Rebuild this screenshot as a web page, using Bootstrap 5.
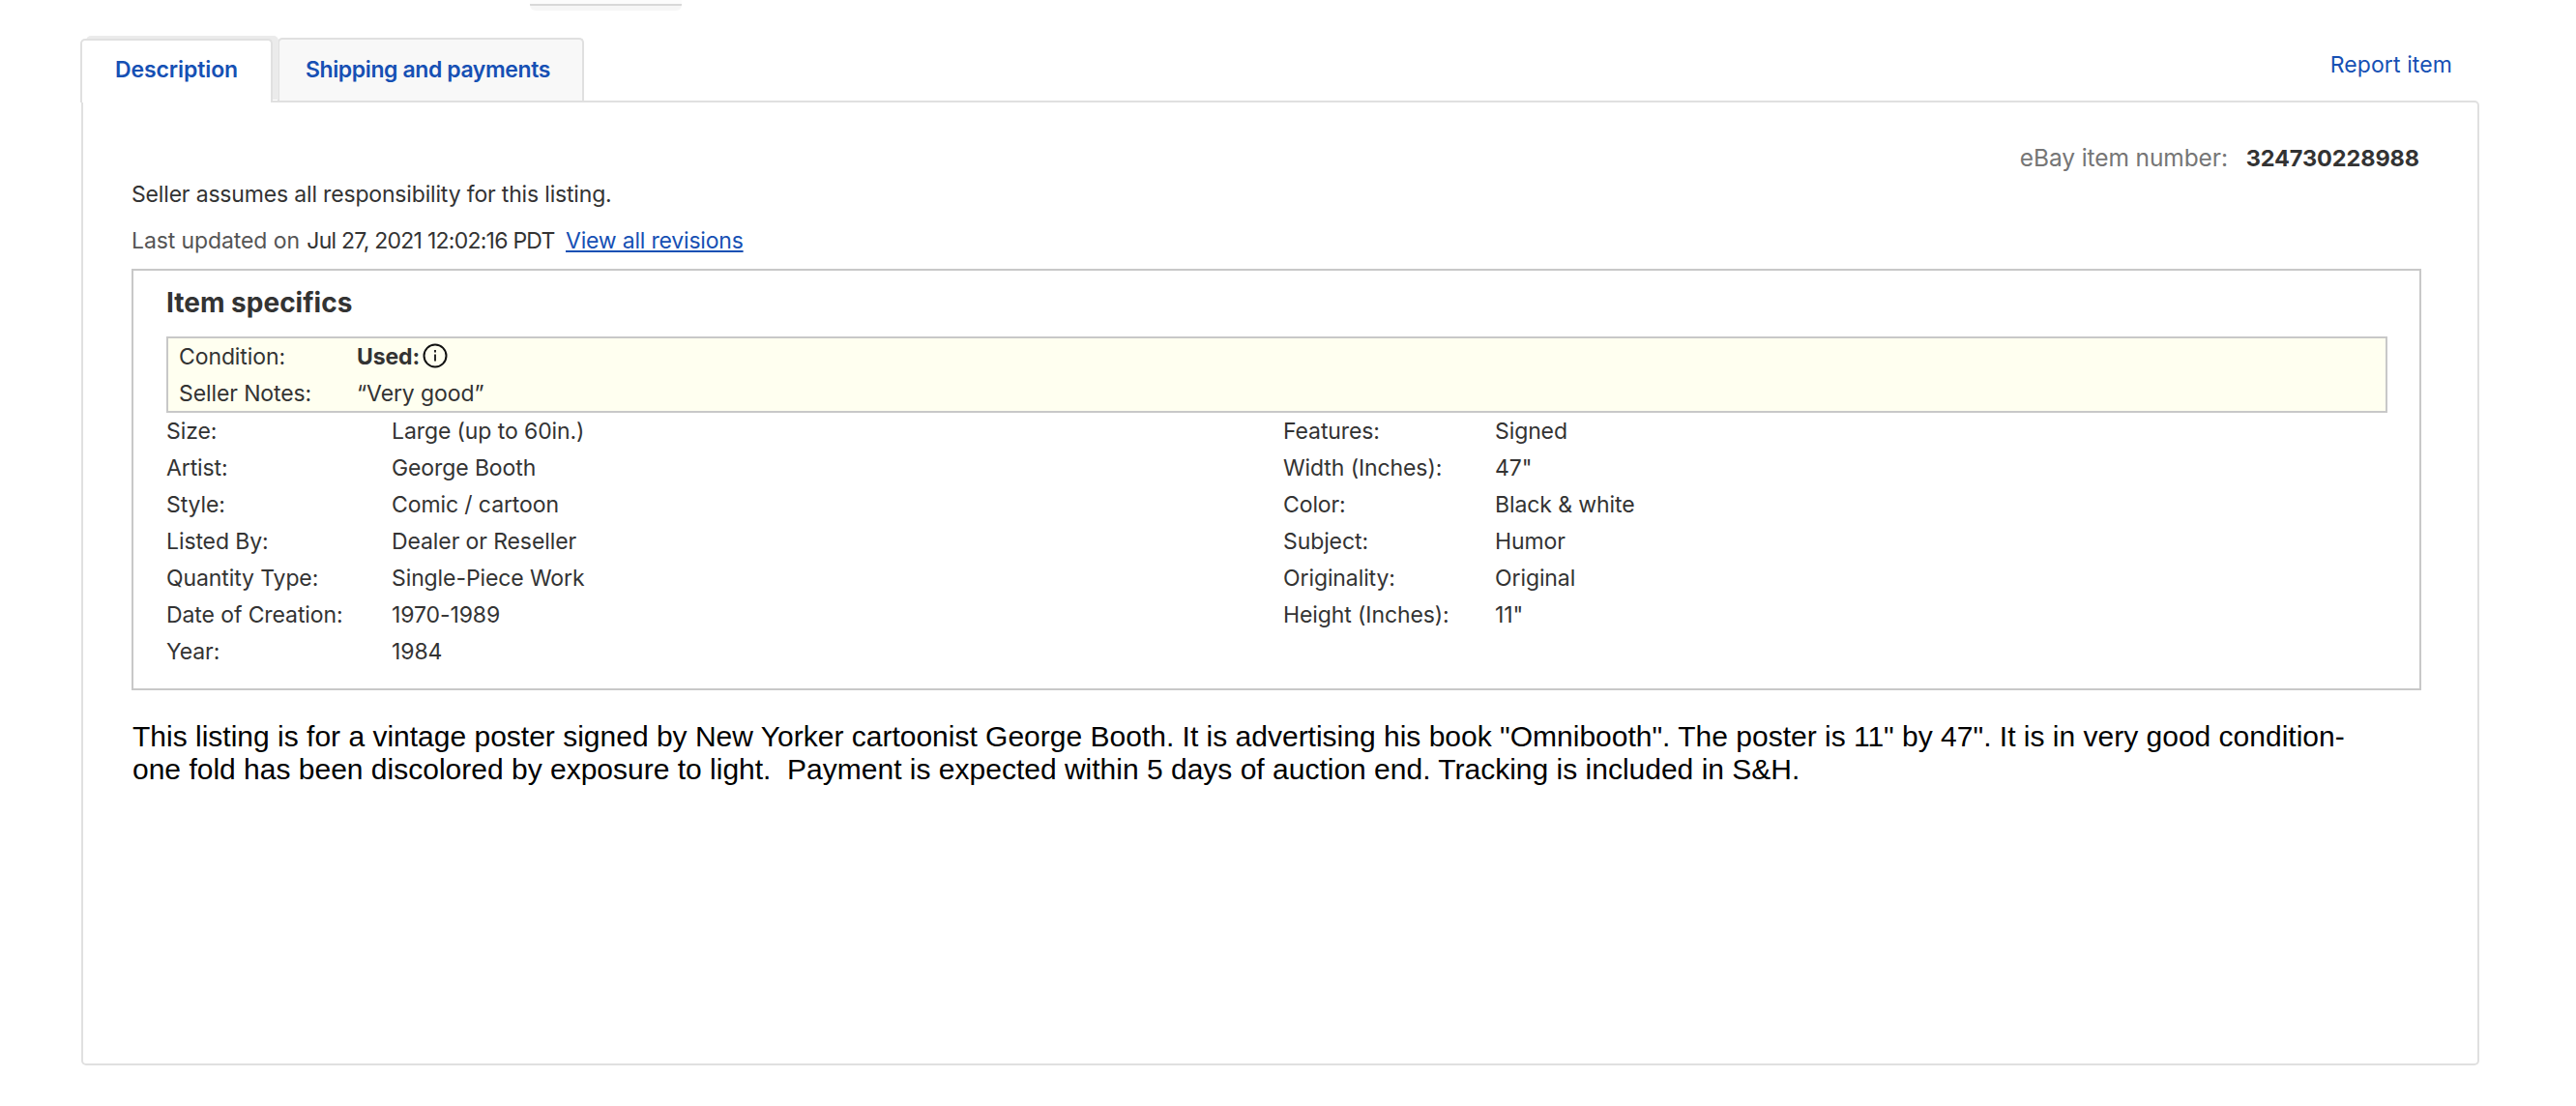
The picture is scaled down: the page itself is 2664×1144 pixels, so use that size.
<!doctype html>
<html lang="en">
<head>
<meta charset="utf-8">
<title>Item description</title>
<link href="https://cdn.jsdelivr.net/npm/bootstrap@5.3.0/dist/css/bootstrap.min.css" rel="stylesheet">
<style>
html,body{background:#fff;}
body{font-family:"Inter","Noto Sans",sans-serif;font-size:23px;letter-spacing:-.1px;color:#333;height:1144px;overflow:hidden;}
.wrap{padding:0 100px 0 83px;}
.topsliver{width:157px;height:11px;margin-left:465px;background:linear-gradient(#fcfcfc 0 4px,#d8d8d8 4px 6px,#f6f6f6 6px);border-radius:0 0 6px 6px;}
.tabline{height:93px;display:flex;align-items:flex-end;justify-content:space-between;}
.ntab{display:block;font-weight:600;color:#1650b4;text-decoration:none;border:2px solid #e0e0e0;border-bottom:0;border-radius:5px 5px 0 0;line-height:28px;}
.ntab.on{width:199px;height:66px;background:#fff;padding:16px 0 0 34px;position:relative;z-index:2;margin-bottom:-2px;box-shadow:6px -3px 0 #ebebeb;}
.ntab.off{width:317px;height:65px;background:#f8f8f8;padding:17px 0 0 27px;margin-left:5px;letter-spacing:-.4px;}
.reportlink{color:#1650b4;text-decoration:none;line-height:30px;margin:0 28px 22px 0;letter-spacing:.1px;}
.panel{height:998px;border:2px solid #e0e0e0;border-radius:0 5px 5px 5px;margin-left:1px;padding:0 58px 0 50px;background:#fff;}
.itemno{color:#767676;text-align:right;padding:41px 2px 0 0;line-height:32px;font-size:24.5px;}
.itemno b{color:#333;font-weight:700;margin-left:12px;font-size:23.5px;}
.assume{line-height:30px;margin-top:6px;letter-spacing:-.17px;}
.updated{line-height:30px;margin-top:18px;color:#555;}
.updated span{color:#333;margin-left:1px;letter-spacing:-.75px;}
.updated a{color:#1650b4;margin-left:5px;letter-spacing:-.2px;}
.specs{border:2px solid #c8c8c8;margin-top:14px;height:436px;padding:0 33px 0 34px;}
.specs h2{font-size:28px;font-weight:700;color:#333;margin:0;padding-top:15px;line-height:36px;height:68px;letter-spacing:0;}
.condbox{background:#fffff0;border:2px solid #c8c8c8;height:79px;padding:0 11px;}
.srow{display:flex;line-height:38px;height:38px;}
.lab1{width:184px;}
.lab2{width:233px;}
.lab3{width:219px;}
.speccols{display:flex;}
.col-l{width:1155px;}
.infoic{width:26px;height:26px;margin-left:3px;vertical-align:-4px;}
.desc{font-family:"Liberation Sans",Arial,sans-serif;font-size:30px;letter-spacing:0;line-height:34px;color:#000;padding:31px 54px 0 1px;}
</style>
</head>
<body>
<div class="wrap">
  <div class="topsliver"></div>
  <div class="tabline">
    <div class="d-flex align-items-end">
      <a class="ntab on" href="#">Description</a>
      <a class="ntab off" href="#">Shipping and payments</a>
    </div>
    <a class="reportlink" href="#">Report item</a>
  </div>
  <div class="panel">
    <div class="itemno">eBay item number: <b>324730228988</b></div>
    <div class="assume">Seller assumes all responsibility for this listing.</div>
    <div class="updated">Last updated on <span>Jul 27, 2021 12:02:16 PDT</span> <a href="#">View all revisions</a></div>
    <div class="specs">
      <h2>Item specifics</h2>
      <div class="condbox">
        <div class="srow"><div class="lab1">Condition:</div><div><b class="fw-bold">Used:</b><svg class="infoic" viewBox="0 0 26 26" fill="none" stroke="#111" stroke-width="2"><circle cx="13" cy="13" r="11.5"/><path d="M13 11.5v7M13 7v2.5" stroke-width="1.8"/></svg></div></div>
        <div class="srow"><div class="lab1">Seller Notes:</div><div>“Very good”</div></div>
      </div>
      <div class="speccols">
        <div class="col-l">
          <div class="srow"><div class="lab2">Size:</div><div>Large (up to 60in.)</div></div>
          <div class="srow"><div class="lab2">Artist:</div><div>George Booth</div></div>
          <div class="srow"><div class="lab2">Style:</div><div>Comic / cartoon</div></div>
          <div class="srow"><div class="lab2">Listed By:</div><div>Dealer or Reseller</div></div>
          <div class="srow"><div class="lab2">Quantity Type:</div><div>Single-Piece Work</div></div>
          <div class="srow"><div class="lab2">Date of Creation:</div><div>1970-1989</div></div>
          <div class="srow"><div class="lab2">Year:</div><div>1984</div></div>
        </div>
        <div>
          <div class="srow"><div class="lab3">Features:</div><div>Signed</div></div>
          <div class="srow"><div class="lab3">Width (Inches):</div><div>47"</div></div>
          <div class="srow"><div class="lab3">Color:</div><div>Black &amp; white</div></div>
          <div class="srow"><div class="lab3">Subject:</div><div>Humor</div></div>
          <div class="srow"><div class="lab3">Originality:</div><div>Original</div></div>
          <div class="srow"><div class="lab3">Height (Inches):</div><div>11"</div></div>
        </div>
      </div>
    </div>
    <div class="desc">This listing is for a vintage poster signed by New Yorker cartoonist George Booth. It is advertising his book "Omnibooth". The poster is 11" by 47". It is in very good condition- one fold has been discolored by exposure to light.&nbsp; Payment is expected within 5 days of auction end. Tracking is included in S&amp;H.</div>
  </div>
</div>
<script src="https://cdn.jsdelivr.net/npm/bootstrap@5.3.0/dist/js/bootstrap.bundle.min.js"></script>
</body>
</html>
